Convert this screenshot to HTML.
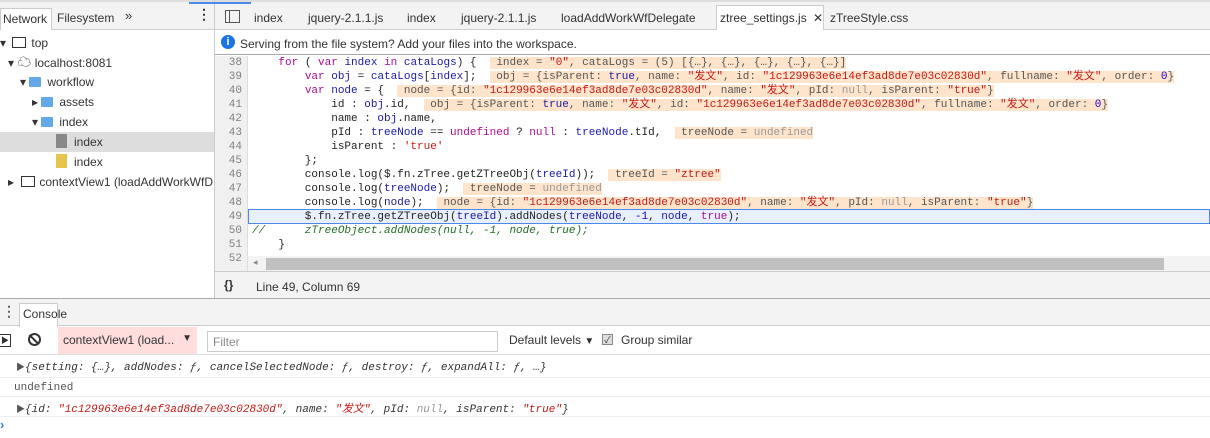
<!DOCTYPE html>
<html><head><meta charset="utf-8"><style>
*{box-sizing:border-box;margin:0;padding:0}
body{width:1210px;height:438px;overflow:hidden;background:#fff;font-family:"Liberation Sans","Noto Sans CJK SC",sans-serif;font-size:12px;color:#333;position:relative}
.abs{position:absolute}
.mono{font-family:"Liberation Mono","Noto Sans CJK SC",monospace;font-size:11px}
.tabbar{top:0;left:0;width:1210px;height:30px;background:#f3f3f3;border-bottom:1px solid #ccc;border-top:2px solid #ddd}
.tab{position:absolute;top:5px;font-size:12px;color:#333}
.tree div{position:absolute;height:20px;line-height:20px;font-size:12px;white-space:nowrap}
.fold{display:inline-block;width:12px;height:10px;background:#64a8ea;border-radius:1px;vertical-align:-1px;margin-right:6px}
.ln{position:absolute;left:215px;width:33px;text-align:right;padding-right:6px;color:#808080}
.cl{position:absolute;left:252px;white-space:pre;color:#222}
.k{color:#aa0d91}.b{color:#1c00cf}.v{color:#1a1aa6}.s{color:#c41a16}.g{color:#999}.c{color:#236e25;font-style:italic}
.an{background:#ffe4cc;color:#555}
.row{height:14px;line-height:14px}
</style></head><body>
<div class="abs tabbar"></div>
<div class="abs" style="top:8px;left:0;width:52px;height:22px;background:#fff;border:1px solid #ccc;border-bottom:none;padding:3px 2px;font-size:12px">Network</div>
<div class="tab" style="left:57px;top:11px">Filesystem</div>
<div class="tab" style="left:125px;top:8px;font-size:13px">»</div>
<div class="tab" style="left:197px;top:6px;font-size:14px;font-weight:bold">⋮</div>
<div class="abs" style="left:214px;top:0;width:1px;height:298px;background:#ccc"></div>
<div class="abs" style="left:189px;top:2px;width:62px;height:2px;background:#4b8ae8"></div>
<div class="abs" style="left:225px;top:10px;width:15px;height:13px;border:1px solid #555"></div>
<div class="abs" style="left:229px;top:10px;width:1px;height:13px;background:#555"></div>
<div class="tab" style="left:254px;top:11px">index</div>
<div class="tab" style="left:308px;top:11px">jquery-2.1.1.js</div>
<div class="tab" style="left:407px;top:11px">index</div>
<div class="tab" style="left:461px;top:11px">jquery-2.1.1.js</div>
<div class="tab" style="left:561px;top:11px">loadAddWorkWfDelegate</div>
<div class="abs" style="left:716px;top:5px;width:108px;height:25px;background:#fff;border:1px solid #ccc;border-bottom:none"></div>
<div class="tab" style="left:720px;top:11px">ztree_settings.js <span style="margin-left:3px">✕</span></div>
<div class="tab" style="left:830px;top:11px">zTreeStyle.css</div>

<div class="tree">
<div style="top:33px;left:0">▾ <span style="display:inline-block;width:14px;height:11px;border:1.5px solid #333;vertical-align:-1px;margin:0 5px 0 3px"></span>top</div>
<div style="top:52px;left:8px">▾ <span style="font-size:14px">☁</span> localhost:8081</div>
<div style="top:72px;left:20px">▾ <span class="fold"></span>workflow</div>
<div style="top:92px;left:32px">▸ <span class="fold"></span>assets</div>
<div style="top:112px;left:32px">▾ <span class="fold"></span>index</div>
<div style="top:132px;left:0;width:214px;background:#ddd"></div>
<div style="top:132px;left:56px"><span style="display:inline-block;width:11px;height:14px;background:#888;vertical-align:-2px;margin-right:7px"></span>index</div>
<div style="top:152px;left:56px"><span style="display:inline-block;width:11px;height:14px;background:#e6c44e;vertical-align:-2px;margin-right:7px"></span>index</div>
<div style="top:172px;left:8px">▸ <span style="display:inline-block;width:14px;height:11px;border:1.5px solid #333;vertical-align:-1px;margin:0 4px"></span>contextView1 (loadAddWorkWfD</div>
</div>

<div class="abs" style="left:215px;top:31px;width:995px;height:24px;border-bottom:1px solid #aaa;background:#fff"></div>
<div class="abs" style="left:221px;top:35px;width:14px;height:14px;border-radius:50%;background:#1a73e8;color:#fff;font-size:11px;font-weight:bold;text-align:center;line-height:14px">i</div>
<div class="abs" style="left:240px;top:37px;font-size:12px">Serving from the file system? Add your files into the workspace.</div>

<div class="abs" style="left:215px;top:56px;width:33px;height:216px;background:#f0f0f0;border-right:1px solid #ddd"></div>
<div class="abs" style="left:248px;top:209px;width:962px;height:15px;background:#e8effd;border:1px solid #4b8ae8"></div>

<div class="mono">
<div class="ln row" style="top:56px">38</div>
<div class="ln row" style="top:70px">39</div>
<div class="ln row" style="top:84px">40</div>
<div class="ln row" style="top:98px">41</div>
<div class="ln row" style="top:112px">42</div>
<div class="ln row" style="top:126px">43</div>
<div class="ln row" style="top:140px">44</div>
<div class="ln row" style="top:154px">45</div>
<div class="ln row" style="top:168px">46</div>
<div class="ln row" style="top:182px">47</div>
<div class="ln row" style="top:196px">48</div>
<div class="ln row" style="top:210px">49</div>
<div class="ln row" style="top:224px">50</div>
<div class="ln row" style="top:238px">51</div>
<div class="ln row" style="top:252px">52</div>
<div class="cl row" style="top:56px">    <span class="k">for</span> ( <span class="k">var</span> <span class="v">index</span> <span class="k">in</span> <span class="v">cataLogs</span>) {  <span class="an"> index = <span class="s">"0"</span>, cataLogs = (5) [{…}, {…}, {…}, {…}, {…}]</span></div>
<div class="cl row" style="top:70px">        <span class="k">var</span> <span class="v">obj</span> = <span class="v">cataLogs</span>[<span class="v">index</span>];  <span class="an"> obj = {isParent: <span class="v">true</span>, name: <span class="s">"发文"</span>, id: <span class="s">"1c129963e6e14ef3ad8de7e03c02830d"</span>, fullname: <span class="s">"发文"</span>, order: <span class="b">0</span>}</span></div>
<div class="cl row" style="top:84px">        <span class="k">var</span> <span class="v">node</span> = {  <span class="an"> node = {id: <span class="s">"1c129963e6e14ef3ad8de7e03c02830d"</span>, name: <span class="s">"发文"</span>, pId: <span class="g">null</span>, isParent: <span class="s">"true"</span>}</span></div>
<div class="cl row" style="top:98px">            id : <span class="v">obj</span>.id,  <span class="an"> obj = {isParent: <span class="v">true</span>, name: <span class="s">"发文"</span>, id: <span class="s">"1c129963e6e14ef3ad8de7e03c02830d"</span>, fullname: <span class="s">"发文"</span>, order: <span class="b">0</span>}</span></div>
<div class="cl row" style="top:112px">            name : <span class="v">obj</span>.name,</div>
<div class="cl row" style="top:126px">            pId : <span class="v">treeNode</span> == <span class="k">undefined</span> ? <span class="k">null</span> : <span class="v">treeNode</span>.tId,  <span class="an"> treeNode = <span class="g">undefined</span></span></div>
<div class="cl row" style="top:140px">            isParent : <span class="s">'true'</span></div>
<div class="cl row" style="top:154px">        };</div>
<div class="cl row" style="top:168px">        console.log($.fn.zTree.getZTreeObj(<span class="v">treeId</span>));  <span class="an"> treeId = <span class="s">"ztree"</span></span></div>
<div class="cl row" style="top:182px">        console.log(<span class="v">treeNode</span>);  <span class="an"> treeNode = <span class="g">undefined</span></span></div>
<div class="cl row" style="top:196px">        console.log(<span class="v">node</span>);  <span class="an"> node = {id: <span class="s">"1c129963e6e14ef3ad8de7e03c02830d"</span>, name: <span class="s">"发文"</span>, pId: <span class="g">null</span>, isParent: <span class="s">"true"</span>}</span></div>
<div class="cl row" style="top:210px">        $.fn.zTree.getZTreeObj(<span class="v">treeId</span>).addNodes(<span class="v">treeNode</span>, <span class="b">-1</span>, <span class="v">node</span>, <span class="k">true</span>);</div>
<div class="cl row c" style="top:224px">//      zTreeObject.addNodes(null, -1, node, true);</div>
<div class="cl row" style="top:238px">    }</div>
</div>
<div class="abs" style="left:248px;top:256px;width:962px;height:15px;background:#f3f3f3"></div>
<div class="abs" style="left:266px;top:258px;width:898px;height:12px;background:#c0c0c0"></div>
<div class="abs" style="left:253px;top:257px;font-size:9px;color:#888">◂</div>

<div class="abs" style="left:215px;top:271px;width:995px;height:28px;background:#f3f3f3;border-top:1px solid #ccc;border-bottom:1px solid #aaa"></div>
<div class="abs" style="left:224px;top:278px;font-weight:bold;font-size:12px">{}</div>
<div class="abs" style="left:256px;top:280px;font-size:12px">Line 49, Column 69</div>
<div class="abs" style="left:0;top:298px;width:215px;height:1px;background:#aaa"></div>

<div class="abs" style="left:0;top:299px;width:1210px;height:27px;background:#f3f3f3;border-bottom:1px solid #ccc"></div>
<div class="abs" style="left:2px;top:303px;font-size:14px;font-weight:bold;color:#666">⋮</div>
<div class="abs" style="left:19px;top:303px;width:39px;height:24px;background:#fff;border:1px solid #ccc;border-bottom:none;padding:3px 3px;font-size:12px">Console</div>
<div class="abs" style="left:0;top:327px;width:1210px;height:28px;background:#fff;border-bottom:1px solid #ddd"></div>
<div class="abs" style="left:0;top:334px;width:11px;height:13px;border:1px solid #333;border-left:none;font-size:8px;line-height:11px;text-align:center">▶</div>
<div class="abs" style="left:28px;top:333px;width:13px;height:13px;border:2px solid #333;border-radius:50%"></div>
<div class="abs" style="left:33px;top:333px;width:2px;height:13px;background:#333;transform:rotate(-45deg)"></div>
<div class="abs" style="left:58px;top:327px;width:139px;height:27px;background:#fdd;padding:6px 5px;font-size:12px;color:#333">contextView1 (load... <span style="float:right;font-size:10px">▼</span></div>
<div class="abs" style="left:207px;top:331px;width:291px;height:21px;border:1px solid #ccc;padding:3px 5px;font-size:12px;color:#888">Filter</div>
<div class="abs" style="left:509px;top:333px;font-size:12px">Default levels <span style="font-size:10px">▼</span></div>
<div class="abs" style="left:602px;top:334px;width:11px;height:11px;background:#ddd;border:1px solid #888;font-size:9px;line-height:10px;text-align:center">✓</div>
<div class="abs" style="left:621px;top:333px;font-size:12px">Group similar</div>

<div class="abs mono" style="left:16px;top:360px;font-style:italic;color:#333"><span style="font-style:normal;font-size:9px;color:#555">▶</span>{setting: {…}, addNodes: ƒ, cancelSelectedNode: ƒ, destroy: ƒ, expandAll: ƒ, …}</div>
<div class="abs" style="left:0;top:377px;width:1210px;height:1px;background:#eee"></div>
<div class="abs mono" style="left:14px;top:382px;color:#555">undefined</div>
<div class="abs" style="left:0;top:396px;width:1210px;height:1px;background:#eee"></div>
<div class="abs mono" style="left:16px;top:400px;font-style:italic;color:#333"><span style="font-style:normal;font-size:9px;color:#555">▶</span>{id: <span class="s">"1c129963e6e14ef3ad8de7e03c02830d"</span>, name: <span class="s">"发文"</span>, pId: <span class="g">null</span>, isParent: <span class="s">"true"</span>}</div>
<div class="abs" style="left:0;top:416px;width:1210px;height:1px;background:#eee"></div>
<div class="abs" style="left:0;top:417px;color:#367cf1;font-weight:bold;font-size:13px">›</div>
</body></html>
